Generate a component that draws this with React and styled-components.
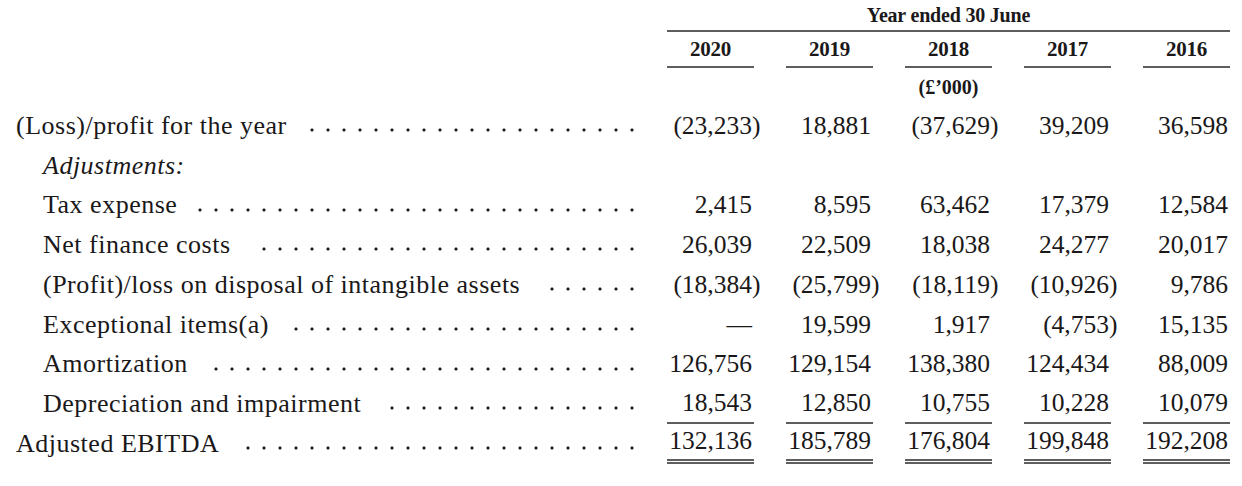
import React from 'react';
import styled, { createGlobalStyle } from 'styled-components';

const GlobalStyle = createGlobalStyle`
    html, body {
        margin:0;
        padding:0;
        background:#fff;
    }
    body {
        font-family:"Liberation Serif", "Times New Roman", serif;
        color:#1a1819;
    }
`;

const Page = styled.div`
    width:1242px;
    height:486px;
    box-sizing:border-box;
    padding:0 12px 0 16px;
    overflow:hidden;
`;

const Table = styled.div`
    display:grid;
    grid-template-columns:1fr repeat(5, 87px);
    column-gap:32px;
`;

const Title = styled.div`
    grid-column:2 / span 5;
    height:32px;
    box-sizing:border-box;
    border-bottom:2px solid #5e5e5e;
    font-size:20px;
    font-weight:bold;
    line-height:30px;
    text-align:center;
    letter-spacing:-0.2px;
`;

const YearCell = styled.div`
    grid-column:${props => props.col};
    height:36px;
    box-sizing:border-box;
    border-bottom:2px solid #5e5e5e;
    font-size:21px;
    font-weight:bold;
    line-height:34px;
    text-align:center;
    letter-spacing:-0.3px;
`;

const UnitCell = styled.div`
    grid-column:4;
    height:38px;
    font-size:20px;
    font-weight:bold;
    line-height:38px;
    text-align:center;
`;

const Spacer = styled.div`
    grid-column:1;
`;

const LabelCell = styled.div`
    grid-column:1;
    height:39.75px;
    display:flex;
    align-items:center;
    padding-left:${props => props.indent ? '27px' : '0'};
    font-size:26px;
    letter-spacing:0.5px;
    font-style:${props => props.italic ? 'italic' : 'normal'};
    white-space:nowrap;
`;

// whole dots only, laid from the right so every row's dots line up
const Leader = styled.div`
    flex:1;
    align-self:flex-start;
    display:flex;
    flex-direction:row-reverse;
    flex-wrap:wrap;
    height:6px;
    overflow:hidden;
    margin:21px -5px 0 12px;
`;

const Dot = styled.span`
    width:16px;
    height:6px;
    flex:none;
    background:radial-gradient(circle, #1a1819 1.3px, transparent 1.8px);
`;

const NumCell = styled.div`
    height:39.75px;
    box-sizing:border-box;
    display:flex;
    align-items:center;
    justify-content:flex-end;
    padding-right:2px;
    font-size:25.5px;
    white-space:nowrap;
    border-bottom:${props => props.rule === 'single' ? '2px solid #5e5e5e' : props.rule === 'double' ? '5px double #5e5e5e' : 'none'};
`;

const Hang = styled.span`
    margin-right:-8.5px;
`;

const years = ['2020', '2019', '2018', '2017', '2016'];
const dots = Array.from({ length: 40 }, (_, i) => i);

const rows = [
    { label: '(Loss)/profit for the year', values: ['(23,233)', '18,881', '(37,629)', '39,209', '36,598'] },
    { label: 'Adjustments:', italic: true, indent: true },
    { label: 'Tax expense', indent: true, values: ['2,415', '8,595', '63,462', '17,379', '12,584'] },
    { label: 'Net finance costs', indent: true, values: ['26,039', '22,509', '18,038', '24,277', '20,017'] },
    { label: '(Profit)/loss on disposal of intangible assets', indent: true, values: ['(18,384)', '(25,799)', '(18,119)', '(10,926)', '9,786'] },
    { label: 'Exceptional items(a)', indent: true, values: ['—', '19,599', '1,917', '(4,753)', '15,135'] },
    { label: 'Amortization', indent: true, values: ['126,756', '129,154', '138,380', '124,434', '88,009'] },
    { label: 'Depreciation and impairment', indent: true, values: ['18,543', '12,850', '10,755', '10,228', '10,079'], rule: 'single' },
    { label: 'Adjusted EBITDA', values: ['132,136', '185,789', '176,804', '199,848', '192,208'], rule: 'double' },
];

const Amount = ({ value }) => {
    if (value.startsWith('(')) {
        return <>{value.slice(0, -1)}<Hang>)</Hang></>;
    }
    return <>{value}</>;
};

const App = () => {
    return (
        <Page>
            <GlobalStyle />
            <Table>
                <Spacer />
                <Title>Year ended 30 June</Title>
                <Spacer />
                {years.map((y, i) => <YearCell key={y} col={i + 2}>{y}</YearCell>)}
                <Spacer />
                <UnitCell>(£’000)</UnitCell>
                {rows.map(row => (
                    <React.Fragment key={row.label}>
                        <LabelCell indent={row.indent} italic={row.italic}>
                            {row.label}
                            {row.values && <Leader>{dots.map(d => <Dot key={d} />)}</Leader>}
                        </LabelCell>
                        {row.values
                            ? row.values.map((v, i) => (
                                <NumCell key={i} rule={row.rule}><Amount value={v} /></NumCell>
                            ))
                            : years.map(y => <NumCell key={y} />)}
                    </React.Fragment>
                ))}
            </Table>
        </Page>
    );
};

export default App;
